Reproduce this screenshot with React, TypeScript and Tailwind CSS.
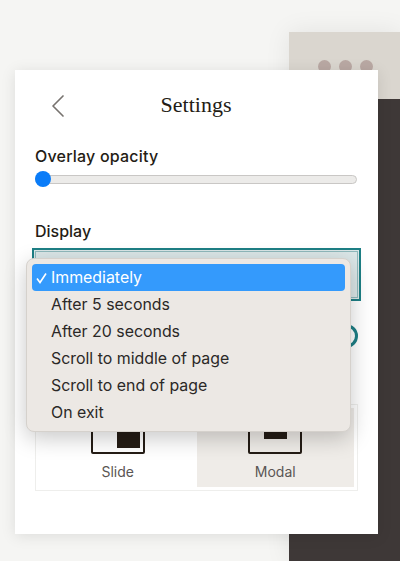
import { ChevronLeft } from 'lucide-react';

const menuItems = ['Immediately', 'After 5 seconds', 'After 20 seconds', 'Scroll to middle of page', 'Scroll to end of page', 'On exit'];

const sans = "font-['Inter','Liberation_Sans',sans-serif]";

function PreviewWindow() {
  return (
    <div className="ml-auto flex h-[529px] w-[111px] flex-col shadow-[0_0_24px_rgba(0,0,0,0.08)]">
      <div className="flex h-[67px] items-center gap-[8px] bg-[#dad6cf] pl-[29px] pt-[1px]">
        <span className="h-[13px] w-[13px] rounded-full bg-[#b9a8a3]" />
        <span className="h-[13px] w-[13px] rounded-full bg-[#b9a8a3]" />
        <span className="h-[13px] w-[13px] rounded-full bg-[#b9a8a3]" />
      </div>
      <div className="flex-1 bg-[#3e3837]" />
    </div>
  );
}

function SelectMenu() {
  return (
    <div className="absolute left-[11px] top-[188px] w-[325px] rounded-[8px] border border-[#d5d1cc] bg-[#ece8e4] px-[5px] py-[5px] text-[15.9px] leading-[27px] text-[#2b2827] shadow-[0_6px_22px_rgba(0,0,0,0.22)]">
      {menuItems.map((item, i) => (
        <div
          key={item}
          className={`relative h-[27px] rounded-[4px] pl-[19px] ${i === 0 ? 'bg-[#349afc] text-white' : ''}`}
        >
          {i === 0 ? (
            <svg className="absolute left-[4px] top-[8px] h-[12px] w-[11px]" viewBox="0 0 11 12" fill="none" stroke="currentColor" strokeWidth="1.6">
              <path d="M1 6.5L4 10.5L10 1.5" />
            </svg>
          ) : null}
          {item}
        </div>
      ))}
    </div>
  );
}

function LayoutOption({ label, active, children }: { label: string; active?: boolean; children: React.ReactNode }) {
  return (
    <div className={`flex h-[79px] flex-1 flex-col items-center justify-end pb-[5px] text-[14px] leading-[20px] text-[#5a5654] ${active ? 'bg-[#efece8]' : ''}`}>
      {children}
      <span className="mt-[8px]">{label}</span>
    </div>
  );
}

export default function App() {
  return (
    <div className={`relative h-[561px] w-[400px] overflow-hidden bg-[#f5f5f3] pt-[32px] ${sans}`}>
      <PreviewWindow />
      <div className="absolute left-[15px] top-[70px] h-[464px] w-[363px] bg-white px-[20px] shadow-[0_2px_14px_rgba(0,0,0,0.1)]">
        <div className="relative flex h-[70px] items-center justify-center pr-[1px]">
          <ChevronLeft className="absolute left-[3px] top-[16px] h-[40px] w-[40px] text-[#77736f]" strokeWidth={1} />
          <h1 className="font-['Liberation_Serif',serif] text-[22px] leading-[30px] text-[#241c15]">Settings</h1>
        </div>
        <div className="mt-[4px] text-[16px] font-medium leading-[24px] tracking-[0.2px] text-[#241c15]">Overlay opacity</div>
        <div className="relative mt-[3px] h-[16px] w-[322px]">
          <div className="absolute left-0 right-0 top-[4px] h-[9px] rounded-full border border-[#c9c7c5] bg-[#ecebe9]" />
          <div className="absolute left-0 top-0 h-[16px] w-[16px] rounded-full bg-[#0a7cf8]" />
        </div>
        <div className="mt-[32px] text-[16px] font-medium leading-[24px] text-[#241c15]">Display</div>
        <div className="-ml-[3px] mt-[5px] h-[53px] w-[329px] border-[2px] border-[#1d7f85] bg-[#dbe7e8] p-[1px]">
          <div className="h-full w-full border border-[#8fb9bc]" />
        </div>
        <div className="flex h-[103px] justify-end pt-[23px]">
          <div className="h-[24px] w-[24px] rounded-full border-[3px] border-[#1d7f85]" />
        </div>
        <div className="flex h-[87px] w-[323px] border border-[#eeeeec] p-[3px]">
          <LayoutOption label="Slide">
            <div className="flex h-[44px] w-[54px] shrink-0 items-end justify-end rounded-b-[2px] border-2 border-[#241c15] pb-[4px] pr-[3px]">
              <div className="h-[30px] w-[23px] bg-[#241c15]" />
            </div>
          </LayoutOption>
          <LayoutOption label="Modal" active>
            <div className="flex h-[44px] w-[54px] shrink-0 items-start justify-center rounded-b-[2px] border-2 border-[#241c15] pt-[17px]">
              <div className="h-[10px] w-[23px] bg-[#241c15]" />
            </div>
          </LayoutOption>
        </div>
        <SelectMenu />
      </div>
    </div>
  );
}
